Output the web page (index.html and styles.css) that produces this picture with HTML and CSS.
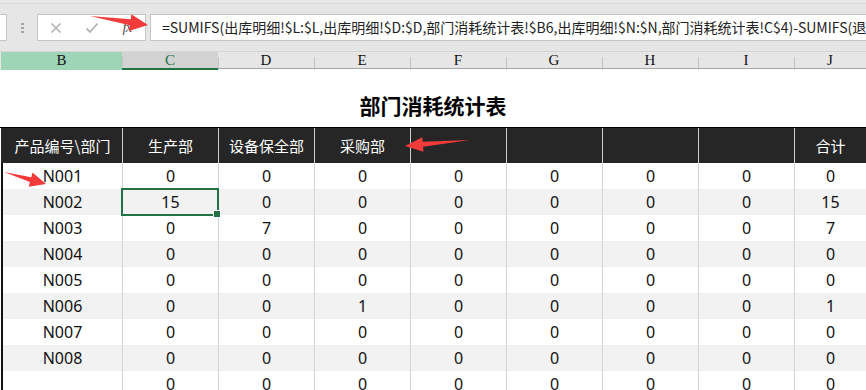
FILE: index.html
```html
<!DOCTYPE html>
<html lang="zh-CN">
<head>
<meta charset="utf-8">
<title>部门消耗统计表</title>
<link rel="stylesheet" href="styles.css">
</head>
<body>
<div class="app">
  <div class="fbar">
    <div class="namebox"></div>
    <div class="dots"><i></i><i></i><i></i></div>
    <div class="btns">
      <span class="btn"><svg width="12" height="12" viewBox="0 0 12 12"><path d="M1.5 1.5 L10.5 10.5 M10.5 1.5 L1.5 10.5" stroke="#b3b3b3" stroke-width="1.6" fill="none"/></svg></span>
      <span class="btn"><svg width="14" height="12" viewBox="0 0 14 12"><path d="M1.5 6.5 L5 10 L12.5 1.5" stroke="#b3b3b3" stroke-width="1.8" fill="none"/></svg></span>
      <span class="btn fx">fx</span>
    </div>
    <div class="formula">=SUMIFS(出库明细!$L:$L,出库明细!$D:$D,部门消耗统计表!$B6,出库明细!$N:$N,部门消耗统计表!C$4)-SUMIFS(退库明细!$L:$L,退库明细!$D:$D,部门消耗统计表!$B6)</div>
  </div>

  <div class="colhdr">
    <div class="ch rowhdr"></div>
    <div class="ch b">B</div>
    <div class="ch c sep">C</div>
    <div class="ch sep">D</div>
    <div class="ch sep">E</div>
    <div class="ch sep">F</div>
    <div class="ch sep">G</div>
    <div class="ch sep">H</div>
    <div class="ch sep">I</div>
    <div class="ch sep">J</div>
  </div>

  <div class="titlearea"><h1 class="title">部门消耗统计表</h1></div>

  <div class="sheet">
    <div class="row head">
      <div class="gap"></div>
      <div class="cell first">产品编号\部门</div>
      <div class="cell">生产部</div>
      <div class="cell">设备保全部</div>
      <div class="cell">采购部</div>
      <div class="cell"></div>
      <div class="cell"></div>
      <div class="cell"></div>
      <div class="cell"></div>
      <div class="cell">合计</div>
    </div>
    <div class="row">
      <div class="gap"></div><div class="cell first">N001</div>
      <div class="cell">0</div><div class="cell">0</div><div class="cell">0</div><div class="cell">0</div><div class="cell">0</div><div class="cell">0</div><div class="cell">0</div><div class="cell">0</div>
    </div>
    <div class="row alt">
      <div class="gap"></div><div class="cell first">N002</div>
      <div class="cell active">15<span class="sel"><span class="handle"></span></span></div><div class="cell">0</div><div class="cell">0</div><div class="cell">0</div><div class="cell">0</div><div class="cell">0</div><div class="cell">0</div><div class="cell">15</div>
    </div>
    <div class="row">
      <div class="gap"></div><div class="cell first">N003</div>
      <div class="cell">0</div><div class="cell">7</div><div class="cell">0</div><div class="cell">0</div><div class="cell">0</div><div class="cell">0</div><div class="cell">0</div><div class="cell">7</div>
    </div>
    <div class="row alt">
      <div class="gap"></div><div class="cell first">N004</div>
      <div class="cell">0</div><div class="cell">0</div><div class="cell">0</div><div class="cell">0</div><div class="cell">0</div><div class="cell">0</div><div class="cell">0</div><div class="cell">0</div>
    </div>
    <div class="row">
      <div class="gap"></div><div class="cell first">N005</div>
      <div class="cell">0</div><div class="cell">0</div><div class="cell">0</div><div class="cell">0</div><div class="cell">0</div><div class="cell">0</div><div class="cell">0</div><div class="cell">0</div>
    </div>
    <div class="row alt">
      <div class="gap"></div><div class="cell first">N006</div>
      <div class="cell">0</div><div class="cell">0</div><div class="cell">1</div><div class="cell">0</div><div class="cell">0</div><div class="cell">0</div><div class="cell">0</div><div class="cell">1</div>
    </div>
    <div class="row">
      <div class="gap"></div><div class="cell first">N007</div>
      <div class="cell">0</div><div class="cell">0</div><div class="cell">0</div><div class="cell">0</div><div class="cell">0</div><div class="cell">0</div><div class="cell">0</div><div class="cell">0</div>
    </div>
    <div class="row alt">
      <div class="gap"></div><div class="cell first">N008</div>
      <div class="cell">0</div><div class="cell">0</div><div class="cell">0</div><div class="cell">0</div><div class="cell">0</div><div class="cell">0</div><div class="cell">0</div><div class="cell">0</div>
    </div>
    <div class="row">
      <div class="gap"></div><div class="cell first"></div>
      <div class="cell">0</div><div class="cell">0</div><div class="cell">0</div><div class="cell">0</div><div class="cell">0</div><div class="cell">0</div><div class="cell">0</div><div class="cell">0</div>
    </div>
  </div>

  <svg class="arrows" width="866" height="390" viewBox="0 0 866 390">
    <polygon points="90,16 130.7,19.2 131.4,14.3 148,25 129.0,31.1 129.7,25.2" fill="#f23b3b"/>
    <polygon points="470,140 422.7,141.8 422.3,137.3 405,146 423.5,151.8 423.1,146.8" fill="#f23b3b"/>
    <polygon points="4,172 31.3,177.2 32.5,172.4 46,184 28.7,186.8 29.9,182.0" fill="#f23b3b"/>
  </svg>
</div>
</body>
</html>
```

FILE: styles.css
```css
* { box-sizing: border-box; }
html, body { margin: 0; padding: 0; background: #fff; }
body { width: 866px; height: 390px; overflow: hidden; font-family: "Noto Sans", "Noto Sans CJK SC", sans-serif; }
.app { position: relative; width: 866px; height: 390px; overflow: hidden; }

.fbar {
  height: 52px;
  display: flex;
  align-items: flex-start;
  padding-top: 14px;
  background: linear-gradient(#e9e9e9 0 3px, #d6d6d6 3px 4px, #e6e6e6 4px);
  border-bottom: 1px solid #d4d4d4;
}
.namebox { flex: none; width: 8px; height: 27px; margin-left: -1px; background: #fff; border: 1px solid #c6c6c6; }
.dots { flex: none; margin: 9px 0 0 14px; width: 3px; display: flex; flex-direction: column; gap: 2px; }
.dots i { display: block; width: 3px; height: 2px; background: #a5a5a5; }
.btns {
  flex: none; margin-left: 13px; width: 109px; height: 27px;
  background: #fff; border: 1px solid #c6c6c6;
  display: flex; align-items: center;
}
.btn { width: 36px; height: 25px; display: flex; align-items: center; justify-content: center; }
.btn.fx { width: 34px; font-family: "Liberation Serif", serif; font-style: italic; font-size: 15px; color: #555; letter-spacing: -1px; }
.formula {
  flex: 1; margin-left: 4px; margin-right: -4px; height: 27px;
  background: #fff; border: 1px solid #c6c6c6;
  padding-left: 11px;
  font-family: "Noto Sans CJK SC", sans-serif; font-size: 14px; line-height: 25px; color: #222;
  white-space: nowrap; overflow: hidden;
}

.colhdr {
  display: grid;
  grid-template-columns: 1px 121px repeat(7, 96px) 72px;
  height: 17px;
  background: #e6e6e6;
  border-bottom: 1px solid #a6a6a6;
}
.ch { position: relative; font-family: "Liberation Serif", serif; font-size: 15px; line-height: 17px; text-align: center; color: #111; }
.ch.rowhdr { background: #e6e6e6; }
.ch.b { background: #9fd5b7; }
.ch.c { background: #d2d2d2; color: #217346; border-bottom: 2px solid #217346; line-height: 16px; }
.ch.sep::before { content: ""; position: absolute; left: 0; top: 5px; bottom: 0; width: 1px; background: #c4c4c4; }

.titlearea { height: 58px; padding-top: 22px; }
.title { margin: 0; text-align: center; font-family: "Noto Sans CJK SC", sans-serif; font-weight: 700; font-size: 21px; line-height: 28px; color: #000; }

.sheet { border-top: 1px solid #000; }
.row {
  display: grid;
  grid-template-columns: 1px 121px repeat(7, 96px) 72px;
  height: 26px;
  background: #fff;
}
.row.alt { background: #f2f2f2; }
.row.head { height: 35px; background: #262626; }
.gap { background: #fff; }
.cell {
  position: relative;
  border-left: 1px solid #d4d4d4;
  display: flex; align-items: center; justify-content: center;
  font-size: 16px; color: #111;
}
.cell.first { border-left: 2px solid #111; }
.row.head .cell { color: #fff; font-family: "Noto Sans CJK SC", sans-serif; font-size: 15px; border-left-color: #d0d0d0; }
.row.head .cell.first { border-left-color: #262626; }

.sel { position: absolute; left: -2px; right: -1px; top: -1px; bottom: -1px; border: 2px solid #217346; z-index: 2; }
.handle { position: absolute; right: -4px; bottom: -4px; width: 8px; height: 8px; background: #217346; border: 1px solid #fff; }

.arrows { position: absolute; left: 0; top: 0; pointer-events: none; z-index: 5; }
```
